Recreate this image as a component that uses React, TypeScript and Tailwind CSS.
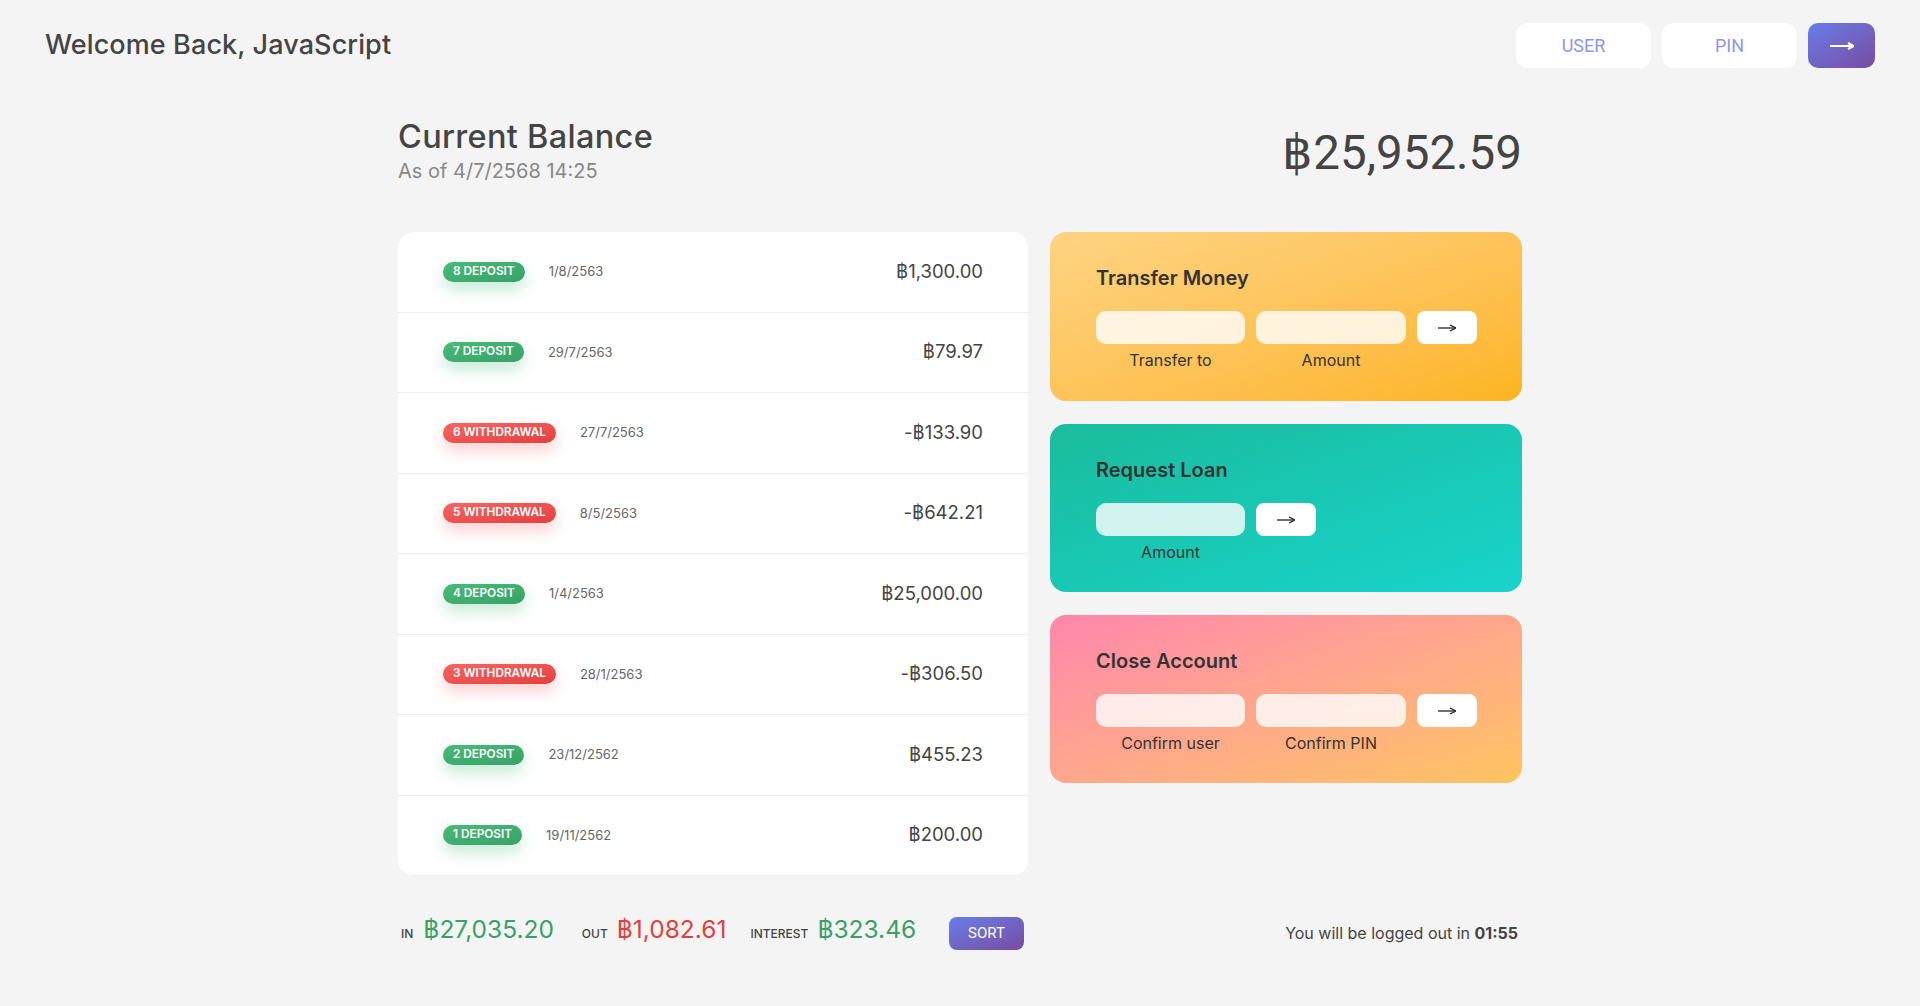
import React from "react";

type Mov = { n: number; type: "deposit" | "withdrawal"; date: string; amount: string };

const movements: Mov[] = [
  { n: 8, type: "deposit", date: "1/8/2563", amount: "฿1,300.00" },
  { n: 7, type: "deposit", date: "29/7/2563", amount: "฿79.97" },
  { n: 6, type: "withdrawal", date: "27/7/2563", amount: "-฿133.90" },
  { n: 5, type: "withdrawal", date: "8/5/2563", amount: "-฿642.21" },
  { n: 4, type: "deposit", date: "1/4/2563", amount: "฿25,000.00" },
  { n: 3, type: "withdrawal", date: "28/1/2563", amount: "-฿306.50" },
  { n: 2, type: "deposit", date: "23/12/2562", amount: "฿455.23" },
  { n: 1, type: "deposit", date: "19/11/2562", amount: "฿200.00" },
];

function Arrow({ color, w, stroke }: { color: string; w: number; stroke: number }) {
  return (
    <svg width={w} height={10} viewBox={`0 0 ${w} 10`} fill="none">
      <line x1="0" y1="5" x2={w - 1.5} y2="5" stroke={color} strokeWidth={stroke} />
      <path d={`M${w - 6} 2 L${w} 5 L${w - 6} 8`} stroke={color} strokeWidth={stroke} fill="none" strokeLinejoin="miter" />
    </svg>
  );
}

function Field({ label, bg }: { label: string; bg: string }) {
  return (
    <div className="flex flex-col items-center">
      <div className={`h-[33px] w-full rounded-[10px] ${bg}`} />
      <div className="mt-[6px] text-[16px] text-[#333] leading-[21px]">{label}</div>
    </div>
  );
}

function ArrowBtn() {
  return (
    <div className="h-[33px] w-[60px] rounded-[8px] bg-white flex items-center justify-center">
      <Arrow color="#222" w={18} stroke={1.3} />
    </div>
  );
}

export default function App() {
  return (
    <div
      className="min-h-screen bg-[#f4f4f4] text-[#444]"
      style={{ fontFamily: "Inter, 'Noto Sans', 'DejaVu Sans', sans-serif" }}
    >
      <nav className="flex items-center justify-between pl-[45px] pr-[45px] pt-[23px]">
        <div className="text-[27px] font-medium text-[#444] tracking-[0.1px]">Welcome Back, JavaScript</div>
        <div className="flex items-center gap-[11px]" style={{ fontFamily: "Roboto, sans-serif" }}>
          <div className="h-[45px] w-[135px] rounded-[12px] bg-white flex items-center justify-center text-[18px] text-[#8f95ee]">
            USER
          </div>
          <div className="h-[45px] w-[135px] rounded-[12px] bg-white flex items-center justify-center text-[18px] text-[#8f95ee]">
            PIN
          </div>
          <div className="h-[45px] w-[67px] rounded-[10px] bg-linear-to-br from-[#667eea] to-[#764ba2] flex items-center justify-center">
            <Arrow color="#fff" w={24} stroke={2} />
          </div>
        </div>
      </nav>

      <main className="mx-auto w-[1124px]">
        <section className="mt-[49px] flex items-center justify-between">
          <div>
            <div className="text-[32.5px] font-medium text-[#444] leading-[40px] tracking-[0.3px]">Current Balance</div>
            <div className="text-[20px] text-[#888] leading-[28px]">As of 4/7/2568 14:25</div>
          </div>
          <div className="text-[47.5px] text-[#444] leading-none mt-[6px]" style={{ fontFamily: "Roboto, sans-serif" }}>
            ฿25,952.59
          </div>
        </section>

        <div className="mt-[47px] grid grid-cols-[630px_472px] gap-x-[22px]">
          <div className="bg-white rounded-[16px] overflow-hidden">
            {movements.map((m) => {
              const dep = m.type === "deposit";
              return (
                <div key={m.n} className="h-[80.5px] border-b border-[#eee] px-[45px] flex items-center">
                  <span
                    className={`h-[20px] px-[10px] rounded-full flex items-center text-[11.8px] leading-none font-semibold uppercase text-white bg-linear-to-br ${
                      dep
                        ? "from-[#48bb78] to-[#38a169] shadow-[0_7px_16px_rgba(72,187,120,0.32)]"
                        : "from-[#f56565] to-[#e53e3e] shadow-[0_7px_16px_rgba(245,101,101,0.32)]"
                    }`}
                  >
                    {m.n} {m.type}
                  </span>
                  <span className="ml-[24px] text-[13px] text-[#666]">{m.date}</span>
                  <span className="ml-auto text-[18.5px] text-[#444]">{m.amount}</span>
                </div>
              );
            })}
          </div>

          <div className="flex flex-col gap-[23px]">
            <div className="h-[169px] rounded-[16px] bg-linear-to-br from-[#fed482] to-[#fdb41d] px-[46px] pt-[33px]">
              <div className="text-[20px] font-semibold text-[#333] leading-[26px]">Transfer Money</div>
              <div className="mt-[20px] grid grid-cols-[149px_150px_60px] gap-x-[11px] items-start">
                <Field label="Transfer to" bg="bg-white/80" />
                <Field label="Amount" bg="bg-white/80" />
                <ArrowBtn />
              </div>
            </div>

            <div className="h-[168px] rounded-[16px] bg-linear-to-br from-[#1abc9c] to-[#19d4cc] px-[46px] pt-[33px]">
              <div className="text-[20px] font-semibold text-[#333] leading-[26px]">Request Loan</div>
              <div className="mt-[20px] grid grid-cols-[149px_60px] gap-x-[11px] items-start">
                <Field label="Amount" bg="bg-white/80" />
                <ArrowBtn />
              </div>
            </div>

            <div className="h-[168px] rounded-[16px] bg-linear-to-br from-[#ff86ac] to-[#fec45e] px-[46px] pt-[33px]">
              <div className="text-[20px] font-semibold text-[#333] leading-[26px]">Close Account</div>
              <div className="mt-[20px] grid grid-cols-[149px_150px_60px] gap-x-[11px] items-start">
                <Field label="Confirm user" bg="bg-white/80" />
                <Field label="Confirm PIN" bg="bg-white/80" />
                <ArrowBtn />
              </div>
            </div>
          </div>

          <div className="mt-[35px] flex items-baseline pl-[3px] pr-[4px]">
            <span className="text-[12px] font-medium uppercase text-[#444]">In</span>
            <span className="ml-[10px] text-[24.5px] text-[#38a169]">฿27,035.20</span>
            <span className="ml-[28px] text-[12px] font-medium uppercase text-[#444]">Out</span>
            <span className="ml-[9px] text-[24.5px] text-[#e53e3e]">฿1,082.61</span>
            <span className="ml-[24px] text-[12px] font-medium uppercase text-[#444]">Interest</span>
            <span className="ml-[9px] text-[24.5px] text-[#38a169]">฿323.46</span>
            <span
              className="ml-auto self-center mt-[6px] h-[33px] w-[75px] rounded-[8px] bg-linear-to-br from-[#667eea] to-[#764ba2] text-white text-[15px] flex items-center justify-center"
              style={{ fontFamily: "Roboto, sans-serif" }}
            >
              SORT
            </span>
          </div>
          <div className="mt-[39px] flex items-center justify-end pr-[4px] text-[16px] text-[#444]">
            <span>
              You will be logged out in <span className="font-bold">01:55</span>
            </span>
          </div>
        </div>
      </main>
    </div>
  );
}
